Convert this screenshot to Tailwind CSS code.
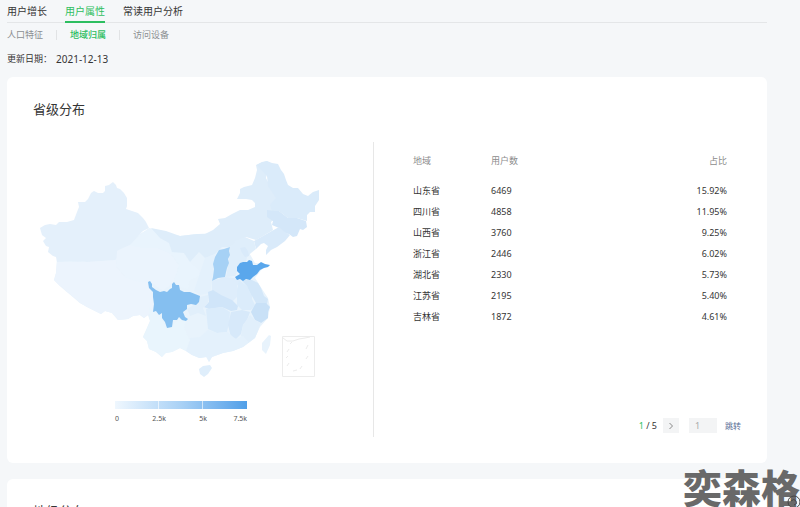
<!DOCTYPE html>
<html lang="zh-CN">

<head>
    <meta charset="UTF-8" />
    <meta name="viewport" content="width=device-width, initial-scale=1.0" />
    <title>用户属性 - 地域归属</title>
    <script src="https://cdn.jsdelivr.net/npm/@tailwindcss/browser@4"></script>
</head>

<body class="relative h-screen overflow-hidden bg-[#f5f7f9] font-['Noto_Sans','Noto_Sans_CJK_SC',sans-serif] text-[#353535]">
    <div class="ml-[7px] mr-[33px]">
        <header>
            <nav class="flex h-[23px] gap-[18px] border-b border-[#e4e6e8] text-[10px] leading-[22px]">
                <a href="#" class="h-[23px]">用户增长</a>
                <a href="#" class="h-[23px] border-b-2 border-[#2dbe60] text-[#2dbe60]">用户属性</a>
                <a href="#" class="h-[23px]">常读用户分析</a>
            </nav>
            <nav class="flex h-6 items-center text-[9px] text-[#8c8f92]">
                <a href="#" class="pr-[13px]">人口特征</a>
                <a href="#" class="border-l border-[#e1e3e5] px-[13px] leading-[10px] font-medium text-[#2dbe60]">地域归属</a>
                <a href="#" class="border-l border-[#e1e3e5] pl-[13px] leading-[10px]">访问设备</a>
            </nav>
            <div class="mb-[6px] flex h-6 items-center">
                <span class="text-[9px]">更新日期：</span>
                <span class="ml-1 text-[10px]">2021-12-13</span>
            </div>
        </header>

        <main class="flex flex-col gap-4">
            <section class="rounded-md bg-white px-[26px] pb-[26px]">
                <h2 class="flex h-[65px] items-center text-[13px]">省级分布</h2>
                <div class="grid grid-cols-[340px_minmax(0,1fr)]">
                    <!-- Peta provinsi -->
                    <div class="pb-3">
                        <svg class="block w-full" viewBox="33 142 340 251" role="img" aria-label="省级分布地图">
                            <!-- base -->
                            <path fill="#e8f3fc" d="M57 258L56 273 54 280 60 286 67 292 73 297 80 303 87 307 97 312 101 314 105 311 112 313 118 320 128 319 133 316 140 315 144 318 148 315 150 321 147 328 143 337 147 341 149 349 156 352 162 357 165 353 172 352 180 348 186 351 192 355 200 358 206 357 209 362 212 357 223 353 233 351 243 347 250 342 255 338 260 327 268 318 270 307 268 298 262 289 257 281 255 278 263 268 262 264 255 263 251 256 245 247 240 232 197 234 180 236 149 229 138 235 117 250 87 262Z" />
                            <!-- xinjiang -->
                            <path fill="#e4f0fb" d="M40 228L45 225 50 224 56 225 59 222 67 222 74 220 77 212 79 207 78 202 85 202 88 199 91 193 94 191 98 193 103 193 105 191 105 186 109 185 113 182 116 185 117 188 120 189 124 193 127 198 127 206 126 209 132 211 138 213 143 218 146 222 149 228 143 231 139 235 135 241 130 245 122 248 117 251 118 256 115 260 87 262 70 261 57 262 56 257 53 256 48 252 49 247 46 246 43 241 46 238 42 235Z" />
                            <!-- tibet -->
                            <path fill="#ecf4fd" d="M57 262L87 262 116 260 116 266 125 277 136 281 148 282 153 297 154 312 148 315 144 318 140 315 133 316 128 319 118 320 112 313 105 311 101 314 97 312 87 307 80 303 73 297 67 292 60 286 54 280 56 273Z" />
                            <!-- qinghai -->
                            <path fill="#ebf4fd" d="M117 251L130 245 143 248 158 248 171 254 179 265 174 282 163 291 153 284 136 281 125 277 116 266Z" />
                            <!-- gansu -->
                            <path fill="#e9f4fd" d="M149 228L158 230 160 238 169 243 172 252 184 253 190 262 200 270 199 276 190 280 188 289 180 287 174 281 179 265 171 254 158 248 143 248 130 245 139 235Z" />
                            <!-- inner mongolia -->
                            <path fill="#deedfa" d="M151 228L166 231 180 236 197 234 205 234 213 230 220 224 218 219 225 218 232 214 240 210 248 210 255 207 255 203 252 200 246 199 237 199 240 193 240 189 244 187 252 185 255 178 257 170 256 165 260 163 267 161 270 164 266 178 270 186 277 191 276 202 272 211 276 218 271 222 273 230 263 236 256 240 246 237 237 242 230 247 222 247 215 254 205 258 199 252 190 262 184 253 172 252 169 243 160 238Z" />
                            <!-- heilongjiang -->
                            <path fill="#daebfa" d="M257 165L262 162 267 161 272 163 278 164 281 170 284 174 286 180 288 185 293 188 298 188 303 194 308 196 313 192 319 190 319 200 315 206 315 212 310 212 307 215 307 221 297 218 288 218 279 211 272 211 270 205 276 198 268 186 267 176Z" />
                            <!-- jilin -->
                            <path fill="#d4e7f9" d="M267 210L275 211 279 211 288 218 297 218 306 221 307 227 303 230 300 229 297 236 293 237 289 234 283 233 279 228 272 225 273 221 267 217Z" />
                            <!-- liaoning -->
                            <path fill="#d9eafa" d="M254 241L263 236 270 232 279 227 285 232 290 235 285 241 277 247 271 250 266 255 266 250 268 246 264 243 261 244 256 249Z" />
                            <!-- hebei -->
                            <path fill="#dfeefb" d="M230 247L235 241 245 237 254 241 256 249 251 253 247 257 246 262 240 265 235 276 226 277 229 260Z" />
                            <path fill="#d9eafa" d="M240 248L245 247 248 251 249 256 245 257 242 253Z" />
                            <!-- shaanxi / ningxia -->
                            <path fill="#e4f1fc" d="M199 276L205 258 215 254 213 270 212 281 210 293 200 295 194 291Z" />
                            <!-- henan -->
                            <path fill="#deedfb" d="M212 281L225 277 235 278 241 281 237 286 238 296 233 301 221 297 212 292Z" />
                            <!-- anhui -->
                            <path fill="#dbecfb" d="M239 280L247 286 252 291 252 299 255 305 251 310 242 310 237 305 237 290Z" />
                            <!-- jiangsu -->
                            <path fill="#d3e7f9" d="M241 280L252 280 258 283 261 288 264 296 268 299 267 304 256 303 252 296 247 286Z" />
                            <!-- hubei -->
                            <path fill="#d0e5f9" d="M208 292L213 290 221 295 232 300 238 306 237 310 231 311 222 307 209 309 204 307 209 302Z" />
                            <!-- chongqing / guizhou -->
                            <path fill="#e1effb" d="M200 297L208 295 208 303 203 308 206 316 198 313 190 316 187 309 197 303Z" />
                            <!-- hunan -->
                            <path fill="#dbecfb" d="M206 309L222 307 230 312 229 323 227 332 217 333 208 329Z" />
                            <!-- jiangxi -->
                            <path fill="#d7e9fa" d="M231 312L242 310 250 312 247 320 243 325 241 334 236 339 231 337 228 325Z" />
                            <!-- zhejiang -->
                            <path fill="#c9e1f7" d="M253 308L256 303 266 303 270 307 268 312 268 318 261 323 255 320 251 312Z" />
                            <!-- fujian -->
                            <path fill="#e1effb" d="M250 315L255 320 261 323 259 328 255 338 248 343 241 336 243 325Z" />
                            <!-- guangdong / guangxi -->
                            <path fill="#e4f1fc" d="M208 330L217 333 227 332 236 339 243 336 249 342 243 347 233 351 223 353 212 357 209 362 207 357 199 358 192 355 186 351 190 338 200 337Z" />
                            <!-- yunnan -->
                            <path fill="#e9f5fd" d="M149 307L154 312 162 317 165 327 172 326 178 319 187 318 184 327 188 337 190 340 186 351 180 348 172 352 166 353 162 357 156 352 149 349 147 341 143 337 147 328 150 321Z" />
                            <!-- hainan, taiwan -->
                            <path fill="#dfeefb" d="M199 369L203 366 210 365 212 368 208 374 204 377 200 374Z" />
                            <path fill="#e8f3fc" d="M269 335L271 336 270 345 266 354 262 350 262 343Z" />
                            <!-- sichuan -->
                            <path fill="#85bff0" d="M148 282L150 281 152 284 152 287 156 290 160 292 164 291 167 292 170 289 172 288 172 284 174 282 176 285 179 285 180 290 184 292 190 292 195 294 200 296 199 302 196 305 191 304 187 305 187 309 183 312 185 317 188 319 186 321 182 320 179 317 177 320 173 320 172 327 167 328 165 322 162 318 162 313 159 315 156 311 153 312 154 304 153 297 153 292 149 288Z" />
                            <!-- shanxi -->
                            <path fill="#a6d1f5" d="M230 247L229 251 230 255 228 259 229 263 227 268 226 272 225 277 218 278 212 281 213 277 214 269 213 264 215 257 219 250 224 249Z" />
                            <!-- shandong -->
                            <path fill="#5aa7ec" d="M235 277L240 274 237 271 237 267 240 263 243 262 247 262 249 260 252 261 253 265 257 265 261 262 265 264 270 265 268 267 264 268 260 270 257 274 253 277 250 280 246 279 243 281 240 279 237 280Z" />
                            <!-- south china sea inset -->
                            <g fill="none" stroke="#ececec">
                                <path d="M282.500 336.500H314.500V376.500H282.500Z" />
                                <path d="M283 338L287 341 293 341 299 339 305 338 310 337M308 345L306 349M308 356L306 359M302 366L300 369M293 371L297 370M289 363L287 366M288 356L286 358M289 349L287 352M290 344L292 342" />
                            </g>
                        </svg>
                        <!-- Legend -->
                        <div class="mt-2 ml-[82px] w-[132px]">
                            <div class="grid h-2 grid-cols-3 divide-x divide-white/60 bg-linear-to-r from-[#eff7fe] via-[#a9d1f5] to-[#509fe8]">
                                <span></span><span></span><span></span>
                            </div>
                            <div class="mt-1 flex justify-between text-[7px] leading-[12px] text-[#555]">
                                <span>0</span>
                                <span class="ml-[7px]">2.5k</span>
                                <span class="ml-[7px]">5k</span>
                                <span>7.5k</span>
                            </div>
                        </div>
                    </div>

                    <!-- Tabel -->
                    <div class="flex flex-col justify-between border-l border-[#e7e7e7] pl-[39px]">
                        <div class="pr-[14px]">
                            <table class="w-full text-[9px]">
                                <thead>
                                    <tr class="h-[38px] text-[#8c8c8c]">
                                        <th class="w-[78px] p-0 text-left font-normal">地域</th>
                                        <th class="p-0 text-left font-normal">用户数</th>
                                        <th class="p-0 text-right font-normal">占比</th>
                                    </tr>
                                </thead>
                                <tbody>
                                    <tr class="h-[21px]"><td class="p-0">山东省</td><td class="p-0">6469</td><td class="p-0 text-right">15.92%</td></tr>
                                    <tr class="h-[21px]"><td class="p-0">四川省</td><td class="p-0">4858</td><td class="p-0 text-right">11.95%</td></tr>
                                    <tr class="h-[21px]"><td class="p-0">山西省</td><td class="p-0">3760</td><td class="p-0 text-right">9.25%</td></tr>
                                    <tr class="h-[21px]"><td class="p-0">浙江省</td><td class="p-0">2446</td><td class="p-0 text-right">6.02%</td></tr>
                                    <tr class="h-[21px]"><td class="p-0">湖北省</td><td class="p-0">2330</td><td class="p-0 text-right">5.73%</td></tr>
                                    <tr class="h-[21px]"><td class="p-0">江苏省</td><td class="p-0">2195</td><td class="p-0 text-right">5.40%</td></tr>
                                    <tr class="h-[21px]"><td class="p-0">吉林省</td><td class="p-0">1872</td><td class="p-0 text-right">4.61%</td></tr>
                                </tbody>
                            </table>
                        </div>
                        <form class="flex items-center justify-end pb-1 text-[9px]">
                            <span><span class="text-[#2dbe60]">1</span> / 5</span>
                            <button type="button" aria-label="下一页" class="ml-[6px] flex h-[15px] w-4 items-center justify-center bg-[#f3f4f5]">
                                <svg class="size-2" viewBox="0 0 8 8" fill="none" stroke="#888"><path d="M2.500 1L5.500 4 2.500 7" /></svg>
                            </button>
                            <input type="text" aria-label="页码" value="1" class="ml-[10px] h-[15px] w-7 bg-[#f3f4f5] px-[6px] text-[9px] text-[#aaa]" />
                            <button type="button" class="ml-2 text-[8px] text-[#576b95]">跳转</button>
                        </form>
                    </div>
                </div>
            </section>

            <section class="rounded-md bg-white px-[26px] pb-[26px]">
                <h2 class="flex h-[65px] items-center text-[13px]">地级分布</h2>
            </section>
        </main>
    </div>

    <!-- Watermark -->
    <div class="absolute right-0 bottom-0 text-[39px] leading-[39px] font-black whitespace-nowrap text-[#696969]">奕森格</div>
    <svg class="absolute right-0 bottom-0 h-3 w-[13px]" viewBox="0 0 13 12" fill="none" stroke="#444">
        <circle cx="7" cy="7" r="6" />
        <path d="M4 6Q7 3 9 6T7 10" />
    </svg>
</body>

</html>
